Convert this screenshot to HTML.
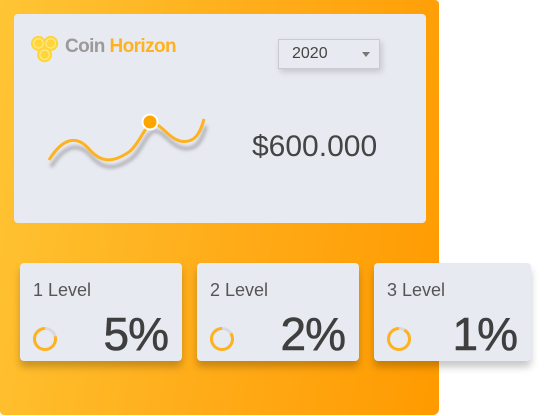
<!DOCTYPE html>
<html><head><style>
body{margin:0;width:547px;height:416px;background:#fff;position:relative;overflow:hidden;font-family:"Liberation Sans",Arial,sans-serif}
.bg{position:absolute;left:0;top:0;width:439px;height:415px;border-radius:0 4px 6px 4px;background:linear-gradient(100deg,#ffc535 0%,#ffad1a 50%,#ff9a00 100%)}
.top{position:absolute;left:14px;top:14px;width:412px;height:209px;background:#e8eaf1;border-radius:4px}
.card{position:absolute;top:263px;width:162px;height:98px;background:#e8eaf1;border-radius:4px;box-shadow:0 6px 8px rgba(0,0,0,.22)}
.lv{position:absolute;left:13px;top:17px;font-size:18px;color:#555;font-weight:300}
.pc{position:absolute;right:14px;top:44px;font-size:46px;color:#3f3f3f;letter-spacing:-1px;-webkit-text-stroke:0.6px #3f3f3f}
.ring{position:absolute;left:12px;top:63px}
</style></head><body>
<div class="bg"></div>
<div class="top">
<svg style="position:absolute;left:16px;top:20px" width="32" height="32" viewBox="0 0 34 34">
<circle cx="9" cy="10" r="8" fill="#ffd53a"/><circle cx="22" cy="10" r="8" fill="#ffd53a"/><circle cx="15.5" cy="22" r="8" fill="#ffd53a"/>
<circle cx="9" cy="10" r="5" fill="none" stroke="#ffe98a" stroke-width="1.3"/><circle cx="22" cy="10" r="5" fill="none" stroke="#ffe98a" stroke-width="1.3"/><circle cx="15.5" cy="22" r="5" fill="none" stroke="#ffe98a" stroke-width="1.3"/>
</svg>
<div style="position:absolute;left:51px;top:22px;font-size:19px;font-weight:bold;letter-spacing:-0.6px"><span style="color:#9a9a9a">Coin</span> <span style="color:#ffb21f">Horizon</span></div>
<div style="position:absolute;left:264px;top:25px;width:100px;height:28px;border:1px solid #c9cbd1;background:#e8eaf1;box-shadow:2px 3px 6px rgba(0,0,0,.15)">
<span style="position:absolute;left:13px;top:5px;font-size:16px;color:#444">2020</span>
<span style="position:absolute;left:83px;top:12px;width:0;height:0;border-left:4.5px solid transparent;border-right:4.5px solid transparent;border-top:5px solid #777"></span>
</div>
<svg style="position:absolute;left:0;top:0" width="220" height="200">
<defs><filter id="b"><feGaussianBlur stdDeviation="1.5"/></filter></defs>
<path d="M35 146 C48 125 62 120 75 135 C88 150 100 148 115 138 C125 130 130 114 136 111 C146 106 152 123 166 127 C180 130 186 120 190 105" transform="translate(2,7)" fill="none" stroke="#a8a9ae" stroke-width="4" opacity=".8" filter="url(#b)"/>
<path d="M35 146 C48 125 62 120 75 135 C88 150 100 148 115 138 C125 130 130 114 136 111 C146 106 152 123 166 127 C180 130 186 120 190 105" fill="none" stroke="#ffb21f" stroke-width="3"/>
<circle cx="136" cy="108" r="7.5" fill="#ffa500" stroke="#fff" stroke-width="2"/>
</svg>
<div style="position:absolute;left:238px;top:116px;font-size:30px;color:#444">$600.000</div>
</div>
<div class="card" style="left:20px"><div class="lv">1 Level</div><svg class="ring" width="26" height="26"><circle cx="13" cy="13" r="10.5" fill="none" stroke="#d8d9df" stroke-width="3"/><circle cx="13" cy="13" r="10.5" fill="none" stroke="#ffb21f" stroke-width="3" stroke-dasharray="52 66" style="transform:scaleX(-1) rotate(-90deg);transform-origin:13px 13px"/></svg><div class="pc">5%</div></div>
<div class="card" style="left:197px"><div class="lv">2 Level</div><svg class="ring" width="26" height="26"><circle cx="13" cy="13" r="10.5" fill="none" stroke="#d8d9df" stroke-width="3"/><circle cx="13" cy="13" r="10.5" fill="none" stroke="#ffb21f" stroke-width="3" stroke-dasharray="55 66" style="transform:scaleX(-1) rotate(-90deg);transform-origin:13px 13px"/></svg><div class="pc">2%</div></div>
<div class="card" style="left:374px;width:157px"><div class="lv">3 Level</div><svg class="ring" width="26" height="26"><circle cx="13" cy="13" r="10.5" fill="none" stroke="#d8d9df" stroke-width="3"/><circle cx="13" cy="13" r="10.5" fill="none" stroke="#ffb21f" stroke-width="3" stroke-dasharray="60 66" style="transform:scaleX(-1) rotate(-90deg);transform-origin:13px 13px"/></svg><div class="pc">1%</div></div>
</body></html>
